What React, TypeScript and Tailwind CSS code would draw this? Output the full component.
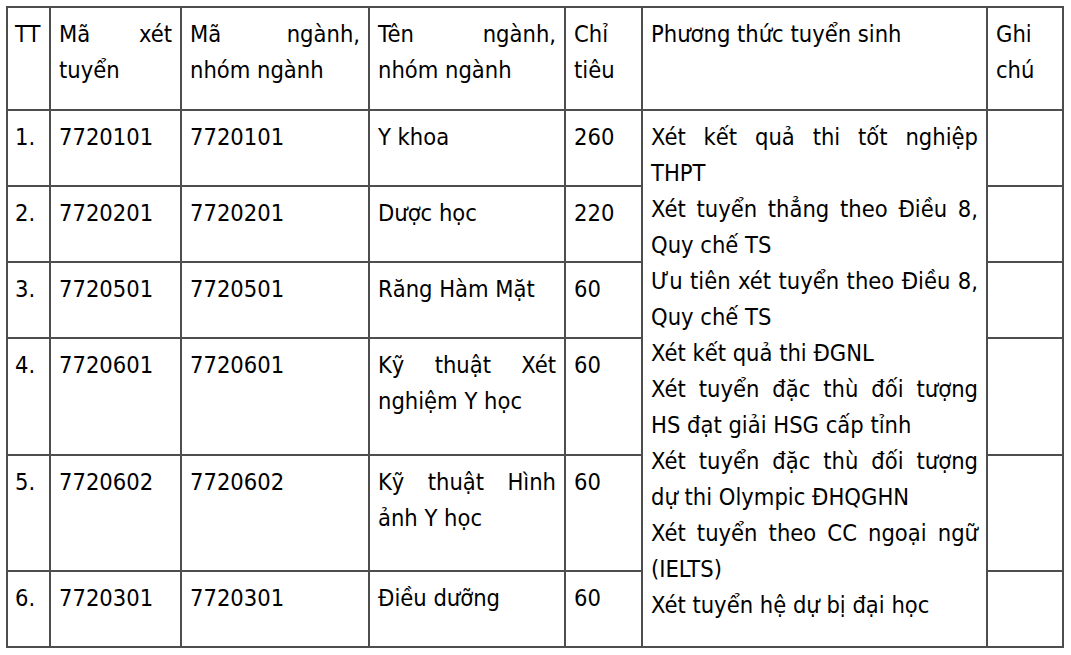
type Line = { text: string; justify?: boolean };

const J = (text: string): Line => ({ text, justify: true });
const L = (text: string): Line => ({ text });

function Lines({ lines }: { lines: Line[] }) {
  return (
    <>
      {lines.map((line, i) => (
        <span
          key={i}
          className={
            line.justify
              ? "block whitespace-nowrap text-justify [text-align-last:justify]"
              : "block whitespace-nowrap"
          }
        >
          {line.text}
        </span>
      ))}
    </>
  );
}

const headers: Line[][] = [
  [L("TT")],
  [J("Mã xét"), L("tuyển")],
  [J("Mã ngành,"), L("nhóm ngành")],
  [J("Tên ngành,"), L("nhóm ngành")],
  [L("Chỉ"), L("tiêu")],
  [L("Phương thức tuyển sinh")],
  [L("Ghi"), L("chú")],
];

const rows = [
  { tt: "1.", ma: "7720101", nganh: "7720101", ten: [L("Y khoa")], chiTieu: "260", h: "h-[76px]" },
  { tt: "2.", ma: "7720201", nganh: "7720201", ten: [L("Dược học")], chiTieu: "220", h: "h-[76px]" },
  { tt: "3.", ma: "7720501", nganh: "7720501", ten: [L("Răng Hàm Mặt")], chiTieu: "60", h: "h-[76px]" },
  {
    tt: "4.",
    ma: "7720601",
    nganh: "7720601",
    ten: [J("Kỹ thuật Xét"), L("nghiệm Y học")],
    chiTieu: "60",
    h: "h-[117px]",
  },
  {
    tt: "5.",
    ma: "7720602",
    nganh: "7720602",
    ten: [J("Kỹ thuật Hình"), L("ảnh Y học")],
    chiTieu: "60",
    h: "h-[116px]",
  },
  { tt: "6.", ma: "7720301", nganh: "7720301", ten: [L("Điều dưỡng")], chiTieu: "60", h: "h-[76px]" },
];

const phuongThuc: Line[] = [
  J("Xét kết quả thi tốt nghiệp"),
  L("THPT"),
  J("Xét tuyển thẳng theo Điều 8,"),
  L("Quy chế TS"),
  J("Ưu tiên xét tuyển theo Điều 8,"),
  L("Quy chế TS"),
  L("Xét kết quả thi ĐGNL"),
  J("Xét tuyển đặc thù đối tượng"),
  L("HS đạt giải HSG cấp tỉnh"),
  J("Xét tuyển đặc thù đối tượng"),
  L("dự thi Olympic ĐHQGHN"),
  J("Xét tuyển theo CC ngoại ngữ"),
  L("(IELTS)"),
  L("Xét tuyển hệ dự bị đại học"),
];

const cell = "border-2 border-[#4d4d4d] px-2 pt-2 align-top";

export default function App() {
  return (
    <div className="min-h-[655px] bg-white pl-[6px] pt-[6px] font-['DejaVu_Sans',sans-serif] text-[23.5px] leading-[36px] text-black font-stretch-condensed">
      <table className="w-[1056px] table-fixed border-collapse">
        <colgroup>
          <col className="w-[43px]" />
          <col className="w-[131px]" />
          <col className="w-[188px]" />
          <col className="w-[196px]" />
          <col className="w-[77px]" />
          <col className="w-[345px]" />
          <col className="w-[76px]" />
        </colgroup>
        <thead>
          <tr>
            {headers.map((lines, i) => (
              <th
                key={i}
                className={`${cell} h-[103px] text-left font-normal ${i === 0 ? "px-[7px]" : ""}`}
              >
                <Lines lines={lines} />
              </th>
            ))}
          </tr>
        </thead>
        <tbody>
          {rows.map((row, i) => (
            <tr key={row.tt}>
              <td className={`${cell} ${row.h} px-[7px]`}>{row.tt}</td>
              <td className={cell}>{row.ma}</td>
              <td className={cell}>{row.nganh}</td>
              <td className={cell}>
                <Lines lines={row.ten} />
              </td>
              <td className={cell}>{row.chiTieu}</td>
              {i === 0 && (
                <td rowSpan={rows.length} className={cell}>
                  <Lines lines={phuongThuc} />
                </td>
              )}
              <td className={cell}></td>
            </tr>
          ))}
        </tbody>
      </table>
    </div>
  );
}
